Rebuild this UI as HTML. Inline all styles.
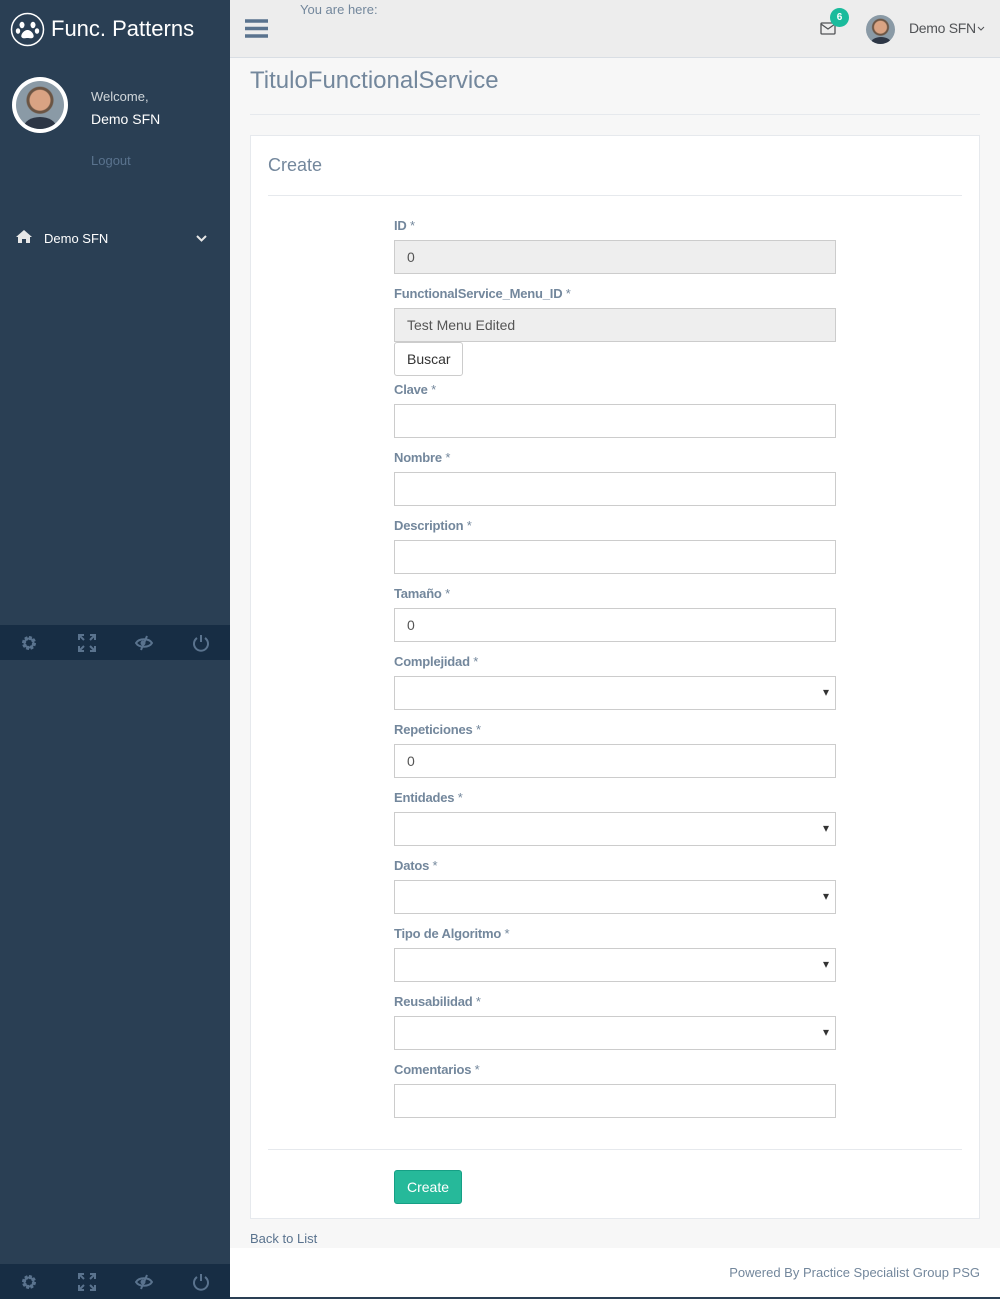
<!DOCTYPE html>
<html><head><meta charset="utf-8"><style>
*{box-sizing:border-box;margin:0;padding:0}
body{width:1000px;height:1299px;position:relative;overflow:hidden;font-family:"Liberation Sans",sans-serif;background:#f7f7f7;color:#73879c;font-size:13px}
.a{position:absolute}
.side{left:0;top:0;width:230px;height:1299px;background:#2a3f54}
.bar{left:0;width:230px;height:35px;background:#172d44}
.bar svg{position:absolute;top:9px}
.lbl{position:absolute;left:394px;font-weight:bold;font-size:13px;color:#73879c;letter-spacing:-0.2px}
.lbl span{font-weight:normal}
.inp{position:absolute;left:394px;width:442px;height:34px;border:1px solid #ccc;background:#fff;font-size:14px;color:#555;padding:8px 12px}
.ro{background:#eee}
.sel::after{content:"▾";position:absolute;right:6px;top:8px;font-size:12px;color:#333}
</style></head><body>
<div class="a side"></div>
<svg class="a" style="left:10px;top:12px" width="35" height="35" viewBox="0 0 35 35"><circle cx="17.5" cy="17.5" r="16" fill="none" stroke="#fff" stroke-width="1.5"/><ellipse cx="12" cy="13" rx="2.5" ry="3.2" fill="#fff"/><ellipse cx="23" cy="13" rx="2.5" ry="3.2" fill="#fff"/><ellipse cx="8" cy="19" rx="2.2" ry="2.8" fill="#fff"/><ellipse cx="27" cy="19" rx="2.2" ry="2.8" fill="#fff"/><path d="M17.5 18c-4 0-7 5-6 7s4 1 6 1 5 1 6-1-2-7-6-7z" fill="#fff"/></svg>
<div class="a" style="left:51px;top:16px;font-size:22px;color:#fff">Func. Patterns</div>
<div class="a" style="left:12px;top:77px;width:56px;height:56px;border-radius:50%;background:#fff;padding:4px"><div style="width:48px;height:48px;border-radius:50%;background:radial-gradient(circle at 50% 40%,#d9a383 0 10px,#6b5544 11px 13px,#8a9aa6 14px);position:relative;overflow:hidden"><div style="position:absolute;left:8px;top:36px;width:32px;height:20px;border-radius:50%;background:#2d3645"></div></div></div>
<div class="a" style="left:91px;top:89px;color:#ecf0f1;font-size:13px;opacity:.85">Welcome,</div>
<div class="a" style="left:91px;top:111px;color:#fff;font-size:14px">Demo SFN</div>
<div class="a" style="left:91px;top:153px;color:#5a738e;font-size:13px">Logout</div>
<svg class="a" style="left:15px;top:229px" width="18" height="15" viewBox="0 0 18 15"><path d="M9 1L1 8h2v6h4v-4h4v4h4V8h2z" fill="#e7e7e7"/></svg>
<div class="a" style="left:44px;top:231px;color:#fff;font-size:13px">Demo SFN</div>
<svg class="a" style="left:196px;top:235px" width="11" height="8" viewBox="0 0 11 8"><path d="M1 1l4.5 4.5L10 1" stroke="#e7e7e7" stroke-width="2" fill="none"/></svg>
<div class="a bar" style="top:625px">
<svg style="left:20px" width="18" height="18" viewBox="0 0 18 18"><circle cx="9" cy="9" r="5" fill="none" stroke="#5a738e" stroke-width="4" stroke-dasharray="2.5 1.4"/><circle cx="9" cy="9" r="4.5" fill="none" stroke="#5a738e" stroke-width="2"/></svg>
<svg style="left:78px" width="18" height="18" viewBox="0 0 18 18"><path d="M1 6V1h5M12 1h5v5M17 12v5h-5M6 17H1v-5M2 2l4 4M16 2l-4 4M16 16l-4-4M2 16l4-4" stroke="#5a738e" stroke-width="2" fill="none"/></svg>
<svg style="left:135px" width="18" height="18" viewBox="0 0 18 18"><path d="M1 9c3-5 13-5 16 0-3 5-13 5-16 0z" fill="none" stroke="#5a738e" stroke-width="2"/><circle cx="8" cy="9" r="2.5" fill="#5a738e"/><path d="M12 2L6 16" stroke="#5a738e" stroke-width="2"/></svg>
<svg style="left:192px" width="18" height="18" viewBox="0 0 18 18"><path d="M5 4a7 7 0 1 0 8 0M9 1v7" stroke="#5a738e" stroke-width="2" fill="none"/></svg>
</div>
<div class="a bar" style="top:1264px">
<svg style="left:20px" width="18" height="18" viewBox="0 0 18 18"><circle cx="9" cy="9" r="5" fill="none" stroke="#5a738e" stroke-width="4" stroke-dasharray="2.5 1.4"/><circle cx="9" cy="9" r="4.5" fill="none" stroke="#5a738e" stroke-width="2"/></svg>
<svg style="left:78px" width="18" height="18" viewBox="0 0 18 18"><path d="M1 6V1h5M12 1h5v5M17 12v5h-5M6 17H1v-5M2 2l4 4M16 2l-4 4M16 16l-4-4M2 16l4-4" stroke="#5a738e" stroke-width="2" fill="none"/></svg>
<svg style="left:135px" width="18" height="18" viewBox="0 0 18 18"><path d="M1 9c3-5 13-5 16 0-3 5-13 5-16 0z" fill="none" stroke="#5a738e" stroke-width="2"/><circle cx="8" cy="9" r="2.5" fill="#5a738e"/><path d="M12 2L6 16" stroke="#5a738e" stroke-width="2"/></svg>
<svg style="left:192px" width="18" height="18" viewBox="0 0 18 18"><path d="M5 4a7 7 0 1 0 8 0M9 1v7" stroke="#5a738e" stroke-width="2" fill="none"/></svg>
</div>
<div class="a" style="left:230px;top:0;width:770px;height:58px;background:#ededed;border-bottom:1px solid #d9dee4"></div>
<svg class="a" style="left:245px;top:19px" width="23" height="19" viewBox="0 0 23 19"><path d="M0 2h23M0 9.5h23M0 17h23" stroke="#5a738e" stroke-width="3.5"/></svg>
<div class="a" style="left:300px;top:2px;font-size:13px;color:#73879c">You are here:</div>
<svg class="a" style="left:820px;top:22px" width="16" height="13" viewBox="0 0 16 13"><rect x="1" y="1" width="14" height="11" rx="1" fill="none" stroke="#515356" stroke-width="1.3"/><path d="M1 2l7 5 7-5" fill="none" stroke="#515356" stroke-width="1.3"/></svg>
<div class="a" style="left:830px;top:8px;width:19px;height:19px;border-radius:50%;background:#1abb9c;color:#fff;font-size:10px;font-weight:bold;text-align:center;line-height:19px">6</div>
<div class="a" style="left:866px;top:15px;width:29px;height:29px;border-radius:50%;background:radial-gradient(circle at 50% 42%,#d9a383 0 6px,#6b5544 7px 8px,#8a9aa6 9px);overflow:hidden"><div style="position:absolute;left:5px;top:22px;width:20px;height:12px;border-radius:50%;background:#2d3645"></div></div>
<div class="a" style="left:909px;top:20px;font-size:14px;color:#515356;letter-spacing:-0.3px">Demo SFN</div>
<svg class="a" style="left:977px;top:26px" width="8" height="5" viewBox="0 0 8 5"><path d="M1 1l3 3 3-3" stroke="#515356" stroke-width="1" fill="none"/></svg>
<div class="a" style="left:250px;top:67px;font-size:24px;color:#73879c">TituloFunctionalService</div>
<div class="a" style="left:250px;top:114px;width:730px;height:1px;background:#e6e9ed"></div>
<div class="a" style="left:250px;top:135px;width:730px;height:1084px;background:#fff;border:1px solid #e6e9ed"></div>
<div class="a" style="left:268px;top:155px;font-size:18px;color:#73879c">Create</div>
<div class="a" style="left:268px;top:195px;width:694px;height:1px;background:#e6e9ed"></div>

<div class="lbl" style="top:218px">ID <span>*</span></div>
<div class="inp ro" style="top:240px">0</div>
<div class="lbl" style="top:286px">FunctionalService_Menu_ID <span>*</span></div>
<div class="inp ro" style="top:308px">Test Menu Edited</div>
<div class="inp" style="top:342px;width:69px;border-radius:3px;color:#333">Buscar</div>
<div class="lbl" style="top:382px">Clave <span>*</span></div>
<div class="inp" style="top:404px"></div>
<div class="lbl" style="top:450px">Nombre <span>*</span></div>
<div class="inp" style="top:472px"></div>
<div class="lbl" style="top:518px">Description <span>*</span></div>
<div class="inp" style="top:540px"></div>
<div class="lbl" style="top:586px">Tamaño <span>*</span></div>
<div class="inp" style="top:608px">0</div>
<div class="lbl" style="top:654px">Complejidad <span>*</span></div>
<div class="inp sel" style="top:676px"></div>
<div class="lbl" style="top:722px">Repeticiones <span>*</span></div>
<div class="inp" style="top:744px">0</div>
<div class="lbl" style="top:790px">Entidades <span>*</span></div>
<div class="inp sel" style="top:812px"></div>
<div class="lbl" style="top:858px">Datos <span>*</span></div>
<div class="inp sel" style="top:880px"></div>
<div class="lbl" style="top:926px">Tipo de Algoritmo <span>*</span></div>
<div class="inp sel" style="top:948px"></div>
<div class="lbl" style="top:994px">Reusabilidad <span>*</span></div>
<div class="inp sel" style="top:1016px"></div>
<div class="lbl" style="top:1062px">Comentarios <span>*</span></div>
<div class="inp" style="top:1084px"></div>

<div class="a" style="left:268px;top:1149px;width:694px;height:1px;background:#e6e9ed"></div>
<div class="a" style="left:394px;top:1170px;width:68px;height:34px;background:#26b99a;border:1px solid #169f85;border-radius:3px;color:#fff;font-size:14px;text-align:center;line-height:32px">Create</div>
<div class="a" style="left:250px;top:1231px;font-size:13px;color:#5a738e">Back to List</div>
<div class="a" style="left:230px;top:1248px;width:770px;height:49px;background:#fff"></div>
<div class="a" style="right:20px;top:1265px;font-size:13px;color:#73879c">Powered By Practice Specialist Group PSG</div>
<div class="a" style="left:230px;top:1297px;width:770px;height:2px;background:#2a3f54"></div>
</body></html>
